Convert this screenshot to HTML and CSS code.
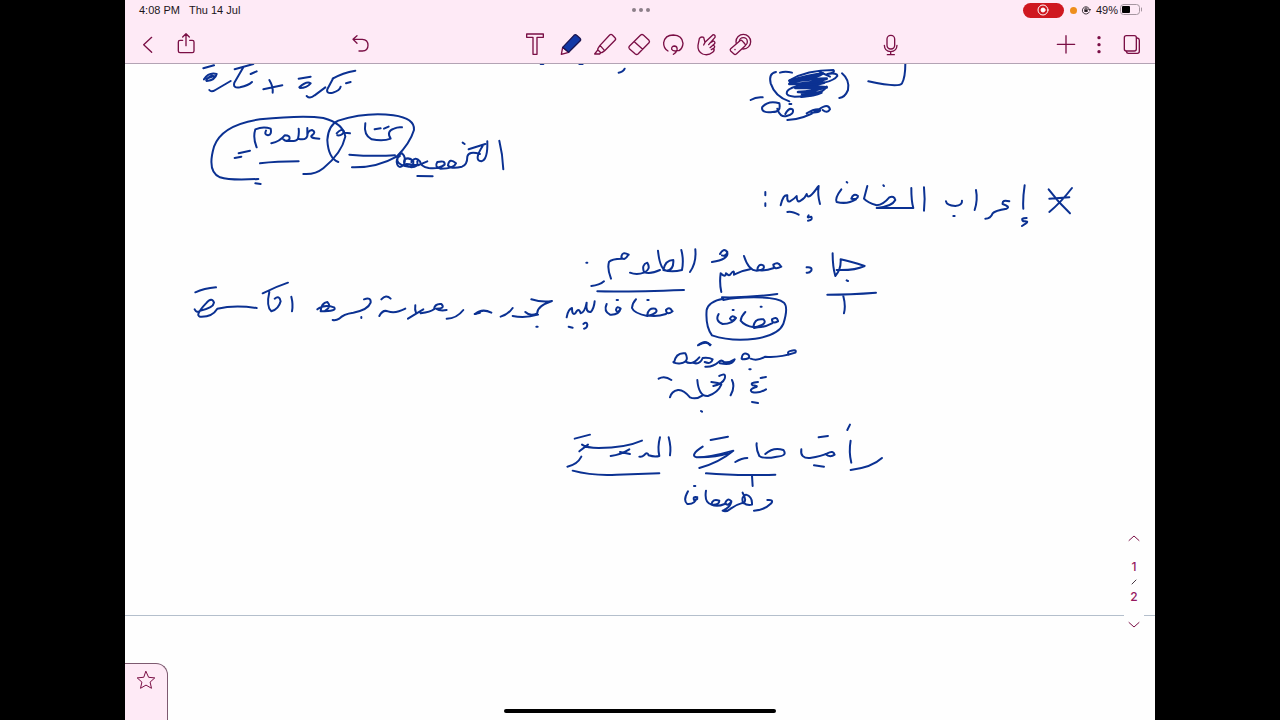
FILE: index.html
```
<!DOCTYPE html>
<html lang="en">
<head>
    <meta charset="UTF-8">
    <meta name="viewport" content="width=device-width, initial-scale=1.0">
    <title>Notes</title>
    <link rel="stylesheet" href="styles.css">
</head>
<body>

<div class="tablet">
    <header>
        <!-- Status bar -->
        <div class="status">
            <div class="status-left">
                <span>4:08 PM</span>
                <span>Thu 14 Jul</span>
            </div>
            <div class="more"><i></i><i></i><i></i></div>
            <div class="status-right">
                <span class="record">
                    <svg viewBox="0 0 12 12"><circle cx="6" cy="6" r="5"/><circle cx="6" cy="6" r="2" class="solid"/></svg>
                </span>
                <span class="orange-dot"></span>
                <svg class="lock" viewBox="0 0 12 12"><path d="M10 8.400A4.400 4.400 0 1 1 10.400 6M9 5l1.500 1.500L12 5"/><path d="M4.800 5.500V4.600a1.200 1.200 0 0 1 2.400 0v.9"/><rect x="4" y="5.500" width="4" height="2.800" class="solid"/></svg>
                <span class="percent">49%</span>
                <svg class="battery" viewBox="0 0 23 12"><rect x=".5" y=".5" width="19" height="10" rx="3"/><rect x="2" y="2" width="8" height="7" rx="1" class="level"/><path d="M21.500 4v3"/></svg>
            </div>
        </div>

        <!-- Toolbar -->
        <div class="toolbar">
            <div class="side side-left">
                <div class="group">
                    <button class="tool" aria-label="Back"><svg viewBox="0 0 72 72"><path d="M50 16L26 38l24 23"/></svg></button>
                    <button class="tool" aria-label="Share"><svg viewBox="0 0 72 72"><path d="M26 25h-8q-5 0-5 5v27q0 5 5 5h37q5 0 5-5V30q0-5-5-5h-8M36 41V6M26 15L36 5l10 10"/></svg></button>
                </div>
                <button class="tool" aria-label="Undo"><svg viewBox="0 0 72 72"><path d="M12 22h28q17 1 17 18T40 57H30M24 11L12 22l12 12"/></svg></button>
            </div>

            <div class="tools">
                <button class="tool" aria-label="Text"><svg viewBox="0 0 72 72"><path d="M11 6h50v10H42v51H30V16H11z"/></svg></button>
                <button class="tool" aria-label="Pen"><svg viewBox="0 0 72 72"><path d="M17 46l-4 21 22-6z"/><path class="pen" d="M17 46L51 10q4-4 8 0l10 9q4 4 0 8L35 61z"/></svg></button>
                <button class="tool" aria-label="Highlighter"><svg viewBox="0 0 72 72"><path d="M27 40L56 9q4-4 8 0l8 8q4 4 0 8L41 56zM27 40l-6 9q-2 3 0 5l7 7q3 2 6 0l7-5M21 53l-10 13h15l4-5"/></svg></button>
                <button class="tool" aria-label="Eraser"><svg viewBox="0 0 72 72"><path d="M13 43L47 9q4-3 8 0l17 16q3 4 0 7L39 66q-4 3-8 0L13 50q-3-4 0-7zM28 29l25 23"/></svg></button>
                <button class="tool" aria-label="Lasso"><svg viewBox="0 0 72 72"><path d="M27 57Q13 48 14 32 18 9 43 9q27 1 29 25-1 15-12 22M57 56q-16 3-19-4-1-10 9-10 9 2 7 12-3 10-11 13"/></svg></button>
                <button class="tool" aria-label="Pointer"><svg viewBox="0 0 72 72"><path d="M36 31L60 8q8 0 6 8L47 38M52 32l10-5q7 4 1 10L51 47M60 39q8 3 3 9l-8 5M62 49q4 6-3 12-14 11-30 5-16-8-14-26l4-20q4-7 13-4l4 15-4 8"/></svg></button>
                <button class="tool" aria-label="Tape"><svg viewBox="0 0 72 72"><circle cx="49" cy="29" r="22"/><circle cx="49" cy="29" r="12"/><path class="cover" d="M11 50l28-24q3-3 6 0l9 10q3 3 0 6L28 66q-4 3-7 0L11 57q-3-4 0-7z"/><path d="M24 52v1"/></svg></button>
            </div>

            <div class="side side-right">
                <button class="tool" aria-label="Record audio"><svg viewBox="0 0 72 72"><rect x="24" y="10" width="23" height="41" rx="11"/><path d="M16 40q1 19 19 19t19-19M35 59v9M25 68h21"/></svg></button>
                <div class="group-right">
                    <button class="tool" aria-label="Add"><svg viewBox="0 0 72 72"><path d="M10 37h52M36 11v52"/></svg></button>
                    <button class="tool" aria-label="Menu"><svg viewBox="0 0 72 72"><g class="dots"><circle cx="36" cy="17" r="5"/><circle cx="36" cy="38" r="5"/><circle cx="36" cy="59" r="5"/></g></svg></button>
                    <button class="tool" aria-label="Pages"><svg viewBox="0 0 72 72"><rect x="13" y="11" width="36" height="46" rx="6"/><path d="M52 18q6 1 6 7v33q0 6-6 6H25q-5 0-6-6"/></svg></button>
                </div>
            </div>
        </div>
    </header>

    <main class="canvas">
        <div class="page">
            <svg class="ink" viewBox="125 64 1030 551" role="img" aria-label="Handwritten lesson notes">
                <!-- top left notes -->
                <g transform="translate(190 60) scale(.3333)">
                    <path d="M40 25L72 16M42 58Q56 36 80 42 76 60 50 63 44 58 66 46M50 56l22-8M58 90q6 8 18 0l46-27M134 28l56-16M160 22L133 68q-5 18 17 14 26-6 36-16M182 42l18-8"/>
                    <path d="M220 88l57-12M238 60q12 20 10 38"/>
                    <path d="M326 56l36-6M328 82q22-20 34-12-12 14-32 14M350 108q10 10 24-2l32-24M428 56q30-18 68-24M430 54l-18 34q-4 14 16 10 22-6 24-18M468 70l14-4"/>
                    <path d="M205 357Q120 362 90 352 50 335 72 260 95 195 210 178q130-13 190-4 60 16 66 56-11 50-66 95-25 20-60 17"/>
                    <path d="M445 306q-30-11-33-66 3-45 33-58 85-27 165-16 65 9 62 44-12 40-52 80"/>
                    <path d="M200 262q-12-28-4-54 24-10 46-2 4 18-8 20-12-2-6-14M244 250q26-6 40-24 18 0 14 12-8 10-18 0M290 242q28 4 34-6 4-16 2-30M324 236q24 6 28-8V204M352 228q0-16 14-18 14 6 0 16-10 8 22 10"/>
                    <path d="M146 280l34-8M134 294l20-4M210 310q50-6 116-6M196 370l16 2"/>
                    <path d="M440 220q14-16 22-6-4 14-20 12M464 218l16 2M526 190q-6 35 19 48 35 7 57-2-14-22 10-30 12-6 24-4M554 208l18-3M582 206l14-6"/>
                    <path d="M478 284q70 6 137 2M486 322q74 2 134-32"/>
                    <path d="M928 242q10 40 12 86M892 244q2 56-18 60-24-2 4-46M836 268l50-16M818 248l6 4M870 282q-34-10-38 8 0 24-16 30-34 8-42-4 4-24 24-6-6 16-46 16-20-4-10-20 24-6 22 8-18 14-48 10-24-4-26-20-14-16-26 2M682 304q4 18-18 18-28-6-20-24 14-8 26 6 2 16-14 16-30-4-34-18 0-18 14-22 14 12 6 34-14 14-20 0-6-18 8-26M650 312l34 4 28-12M682 348l46 1"/>
                </g>
                <!-- top right notes -->
                <g transform="translate(740 60) scale(.3333)">
                    <path d="M108 36q-23 4-16 34 13 40 56 54M120 38q16-6 36 0M306 40q24 20 18 50-9 22-26 24"/>
                    <path class="heavy" d="M148 62q60-16 100-22-10 12-98 26 70-10 110-10-40 14-112 16 60 0 104-4-40 12-86 16 50 0 84 0-30 10-76 12l70 2q-20 10-60 12M170 74q50 6 90 8M186 102q30 4 56-6"/>
                    <path d="M150 60q50-30 130-30 8 8-18 12 30-4 30 6-16 24-120 30-34 10-32 22 0 8 24 10 76 0 96-30M240 36l30 14"/>
                    <path d="M32 120q16-10 36-8M66 142q19-22 52-12 6 26-20 26-32 4-32-12M112 146q8 28 28 22 24-6 18-20-12-6-22 14M148 132h6M142 180q50-2 95-32 28-20 33 0-8 14-22 2M200 160q22-14 38-12 10 8-24 10"/>
                    <path d="M496 12q0 40-10 58-10 14-101-6"/>
                    <path d="M926 388q30 40 64 72M996 384q-34 44-68 72M928 416l60-4"/>
                    <path d="M854 376q-6 40-4 70M860 474q-20 0-10 10 18-2 8 6l-12 8M808 424q-22-6-20 8 24 8 12 14-36 6-42 14-6 16-22 16"/>
                    <path d="M708 390q6 30-4 60M618 424q2 12 28 14 22-2 20-16M640 468h4"/>
                    <path d="M552 382q4 36 0 70M514 384q0 40 6 60H410q46-4 56-24-4-14-18-8-18 22-38 24-28-8-38-20l10-38M430 376l2 2"/>
                    <path d="M334 416q6-18 20-8 0 12-20 8M348 418q-26 16-58 8-6-12 14-38M320 366l2 2"/>
                    <path d="M236 378q-4 26 4 54M122 436q8-34 20-30-2 22 8 18 14-8 20-16 0 22 12 14 14-8 18-20 4 22 34-22M142 456q12-4 34 8M206 466q-8 10 8 4 6 10-10 12M76 396v10M76 430v8"/>
                </g>
                <g transform="translate(520 60) scale(.3333)">
                    <path d="M62 12h8M178 12h10M296 38q14-2 18-12"/>
                </g>
                <!-- third line, left half -->
                <g transform="translate(180 240) scale(.3333)">
                    <path d="M46 157q26-12 62-15M44 208q6 12 16 4 40-8 42-24-6-18-24 2-34 36-18 40 36 2 52-24 52-12 118-2"/>
                    <path d="M248 160q40-20 76-32M268 156q-10 44 6 58 22-6 28-30-4-20-18-8M334 170q6 24 2 44"/>
                    <path d="M412 208q20-16 50-6 12 12-40 12 2-26 20-28 14 14-6 26M552 178q22-8 20 10-8 22-52 30-30 4-42 18-10 6-20 4M544 231v3"/>
                    <path d="M604 178q14-16 28-2M598 228q10-20 26-14 22 8 52-8M684 236q22-14 46-28M706 196q-2 14 2 22M722 220q30-4 40-12 2-18 22-16 14 14-16 14 12 8 32 4M800 236q30 0 50-26M884 222l16-4"/>
                </g>
                <!-- second and third lines -->
                <g transform="translate(470 240) scale(.3333)">
                    <path d="M1088 40q0 40 8 68 18-20 16-50 30 6 72 20-30 14-84 12M1130 121l4 2M1010 82q18-2 14 10-6 8-14 6M1072 164q68 0 146-6M1120 168q8 30 2 52"/>
                    <path d="M932 78q-8-14-22-4 2 18 24 6M912 84q-26 10-50 6 2-20 18-14 8 14-20 16-24 0-38-44M840 88q-26 4-48 16 2-18-10-2-4 8-14-2-2 14-16 0-4 30 2 56M750 42q10-20 22-6-4 14-16 10M772 38q4 20-46 28"/>
                    <path d="M676 28q4 40-16 68M634 30q8 30 2 60-30 8-56 0 6-30 30-30 2 30-20 32-20-2-26-60M570 90q-30 14-48 6-8-22 10-28 12 20-10 30-22 8-42 0M476 44q-20-12-22 8 10 12 20-6M455 56q-30 0-38 10-6 20 6 50M364 138q24-2 38-14M349 68h3"/>
                    <path d="M382 154q90 2 260-4M756 172q80 2 166-10"/>
                    <path d="M760 176q-44 8-50 34-4 50 16 76 60 20 130 10 70-10 84-44 16-50 2-64-20-16-90-16-60 0-92 8"/>
                    <path d="M924 242q-4-14-18-4 0 16 18 6M906 250q-30 16-56 10 4-26 30-22 16 14-28 24-28-4-40-20 2-14 14-26M798 234q-12-12-18 2 6 12 18-2-10 18-40 18-24-10-12-30M872 200h3M788 210h3M852 264l20-4"/>
                    <path d="M606 212q-8-14-18-2 2 18 20 4M588 222q-30 10-56 4 2-24 24-20 14 12-24 22-40-8-46-24 2-16 12-26M532 180h4M452 206q-12-10-14 4 4 12 14-4-6 20-32 18-20-10-10-32M440 180h4"/>
                    <path d="M374 184q-2 22-12 32-16 2-12-28-6 30-18 32-6-20-16 0-10 8-10-16-12 4-16 28M296 260l12 3M340 252q10-8 12 2 0 10-10 12"/>
                    <path d="M184 178q32 10 62 5-46 16-44 37-22 10-36-4M204 224q-40 12-76 4M92 230q22-6 36-26M199 260h4M16 222q20-18 48-4M684 316q24-20 36 0"/>
                </g>
                <!-- bottom lines -->
                <g transform="translate(560 330) scale(.3333)">
                    <path d="M418 44q20-12 34 0M342 98q6-32 34-28 14 24-14 30-14 2-22-4M376 94q20 14 42-12M396 98q24 8 32-14 20-2 30 4-4 16-24 8M436 110q22 2 40-14 8-8 16 0 14 4 32-8-8 20-44 12M545 86q2-22 20-12 10 14-18 14M572 86q20 8 44-6 40 4 90-12 6-10-12-6-14 2-8 12M568 118h4"/>
                    <path d="M296 146q18-10 38 4M602 144l16-3M594 156q-26 2-16 10 20 2 8 6-20 6-10 14 20 6 42-8M576 216l18 3M516 150q10 20-4 46M478 138q22-12 16 8-6 16-34 22M454 156q22 2 30 8-10 24-40 34-28 2-32-48M428 196q-20 14-38 6-20-24-36-22-20 4-24 22M423 243l3 2"/>
                    <path d="M966 384q-30 28-94 36M872 332q-6 34 2 66M862 300l8-16M776 322l28-4M724 358q-4 28 26 26 36-6 52-14 18-10 22 4-14 10-28-2M762 406l30 4"/>
                    <path d="M616 372q24-22 54-12 14 18-20 20-40 8-52-2-10-20-8-38M526 396q20-12 36-12M428 350q-40 26-18 32 40 0 110-20-40 34-102 52M420 382q50 0 84-12M452 330l52-10"/>
                    <path d="M326 322q8 30 4 54M300 322q-8 30-2 56-14 4-32-2-4-12-14 0-6 6-14 4M152 378q30-4 56-20M180 366l30 6M246 332q-50 22-130 22-36 0-50-10M58 364l26-20M44 326l46-12M64 380q-12 24-42 30"/>
                    <path d="M38 422q60 16 132 12l128-4M438 430q90 8 208 4M576 436l2 32"/>
                    <path d="M622 510q20-2 12 10-20 20-52 22M548 488q14 24 2 32-8-20 8-26 20 6 18 30-14 4-26-6-22 6-38 18-14 12-24 6 24-10 26-28-12-12-18 4 4 14 18-2M494 522q-22 10-40 2 4-20 24-12 0 14-22 12-24-4-18-42M412 502q-14-4-10 8 14-2 8-6-6 20-28 18-14-10 2-38M402 468h4"/>
                </g>
            </svg>
        </div>

        <nav class="pager">
            <button aria-label="Previous page"><svg viewBox="0 0 12 8"><path d="M1 6.500L6 2l5 4.500"/></svg></button>
            <span>1</span>
            <svg class="slash" viewBox="0 0 6 6"><path d="M1 5l4-4"/></svg>
            <span>2</span>
            <button aria-label="Next page"><svg viewBox="0 0 12 8"><path d="M1 1.500L6 6l5-4.500"/></svg></button>
        </nav>

        <button class="favourite" aria-label="Favourites">
            <svg viewBox="0 0 20 20"><path d="M10 1.500l2.600 5.800 6.200.6-4.700 4.200 1.400 6.200L10 15.100l-5.500 3.200 1.400-6.200L1.200 7.900l6.200-.6z"/></svg>
        </button>
        <div class="home-bar"></div>
    </main>
</div>

</body>
</html>
```
FILE: styles.css
```
* {
    box-sizing: border-box;
}
body {
    margin: 0;
    padding: 0 125px;
    background-color: #000;
    font-family: Inter, "Liberation Sans", sans-serif;
}
button {
    padding: 0;
    border: none;
    background: none;
    cursor: pointer;
}
svg {
    display: block;
    fill: none;
    stroke: #7a0f45;
    stroke-linecap: round;
    stroke-linejoin: round;
}
.tablet {
    display: flex;
    flex-direction: column;
    min-height: 100vh;
    background-color: #fefefe;
}
header {
    background-color: #feeaf6;
    border-bottom: 1px solid #b3a3b4;
}

/* Status bar */
.status {
    display: grid;
    grid-template-columns: 1fr auto 1fr;
    align-items: center;
    height: 20px;
    padding: 0 12px 0 14px;
    font-family: "Liberation Sans", Arial, sans-serif;
    font-size: 11px;
    color: #1c151a;
}
.status-left {
    display: flex;
    gap: 9px;
}
.more {
    display: flex;
    gap: 3px;
}
.more i {
    width: 4px;
    height: 4px;
    border-radius: 50%;
    background-color: #8c7f88;
}
.status-right {
    display: flex;
    justify-content: flex-end;
    align-items: center;
}
.record {
    display: flex;
    align-items: center;
    justify-content: center;
    width: 41px;
    height: 15px;
    margin-right: 6px;
    border-radius: 8px;
    background-color: #cf1820;
}
.record svg {
    width: 12px;
    height: 12px;
    stroke: #fff;
}
.record .solid {
    fill: #fff;
}
.orange-dot {
    width: 7px;
    height: 7px;
    margin-right: 4px;
    border-radius: 50%;
    background-color: #ee8e1c;
}
.lock {
    width: 10px;
    height: 10px;
    margin-right: 5px;
    stroke: #1c151a;
}
.lock .solid {
    fill: #1c151a;
    stroke: none;
}
.percent {
    margin-right: 2px;
}
.battery {
    width: 23px;
    height: 12px;
    stroke: #a596a0;
}
.battery .level {
    fill: #000;
    stroke: none;
}

/* Toolbar */
.toolbar {
    display: grid;
    grid-template-columns: 1fr 244px 1fr;
    align-items: center;
    height: 43px;
    padding-top: 5px;
}
.side,
.group,
.group-right,
.tools {
    display: flex;
    align-items: center;
}
.side {
    justify-content: space-between;
}
.side-left {
    padding: 0 140px 0 5px;
}
.side-right {
    padding: 0 7px 0 112px;
}
.group {
    gap: 5px;
}
.tool {
    display: flex;
    align-items: center;
    justify-content: center;
    width: 34px;
    height: 34px;
}
.group-right .tool {
    width: 33px;
}
.tool svg {
    width: 24px;
    height: 24px;
    stroke-width: 4;
    overflow: visible;
}
.tool .pen {
    fill: #1238a5;
    stroke: #1b1550;
}
.tool .cover {
    fill: #feeaf6;
}
.tool .dots {
    fill: #7a0f45;
    stroke: none;
}

/* Drawing area */
.canvas {
    position: relative;
    flex: 1;
}
.page {
    border-bottom: 1px solid #b4bfcc;
}
.ink {
    width: 100%;
    height: auto;
    stroke: #0b3192;
    stroke-width: 6;
}
.ink .heavy {
    stroke-width: 8;
}
.pager {
    position: absolute;
    right: 11px;
    bottom: 87px;
    display: flex;
    flex-direction: column;
    align-items: center;
    width: 20px;
    background-color: #fefefe;
    font-size: 12px;
    line-height: 16px;
    font-weight: 500;
    color: #96185f;
}
.pager button {
    width: 20px;
    height: 16px;
}
.pager button svg {
    width: 12px;
    height: 8px;
    margin: 0 auto;
}
.pager button:first-child {
    margin-bottom: 13px;
}
.pager button:last-child {
    margin-top: 12px;
}
.slash {
    width: 6px;
    height: 6px;
    margin: 4px 0;
    stroke: #443640;
}
.favourite {
    position: absolute;
    left: 0;
    bottom: 0;
    width: 43px;
    height: 57px;
    padding-bottom: 24px;
    border-top: 1px solid #7d5a70;
    border-right: 1px solid #7d5a70;
    border-top-right-radius: 12px;
    background-color: #feeaf6;
}
.favourite svg {
    width: 20px;
    height: 20px;
    margin: 0 auto;
}
.home-bar {
    position: absolute;
    left: 50%;
    bottom: 7px;
    width: 272px;
    height: 4px;
    margin-left: -136px;
    border-radius: 2px;
    background-color: #000;
}
```
